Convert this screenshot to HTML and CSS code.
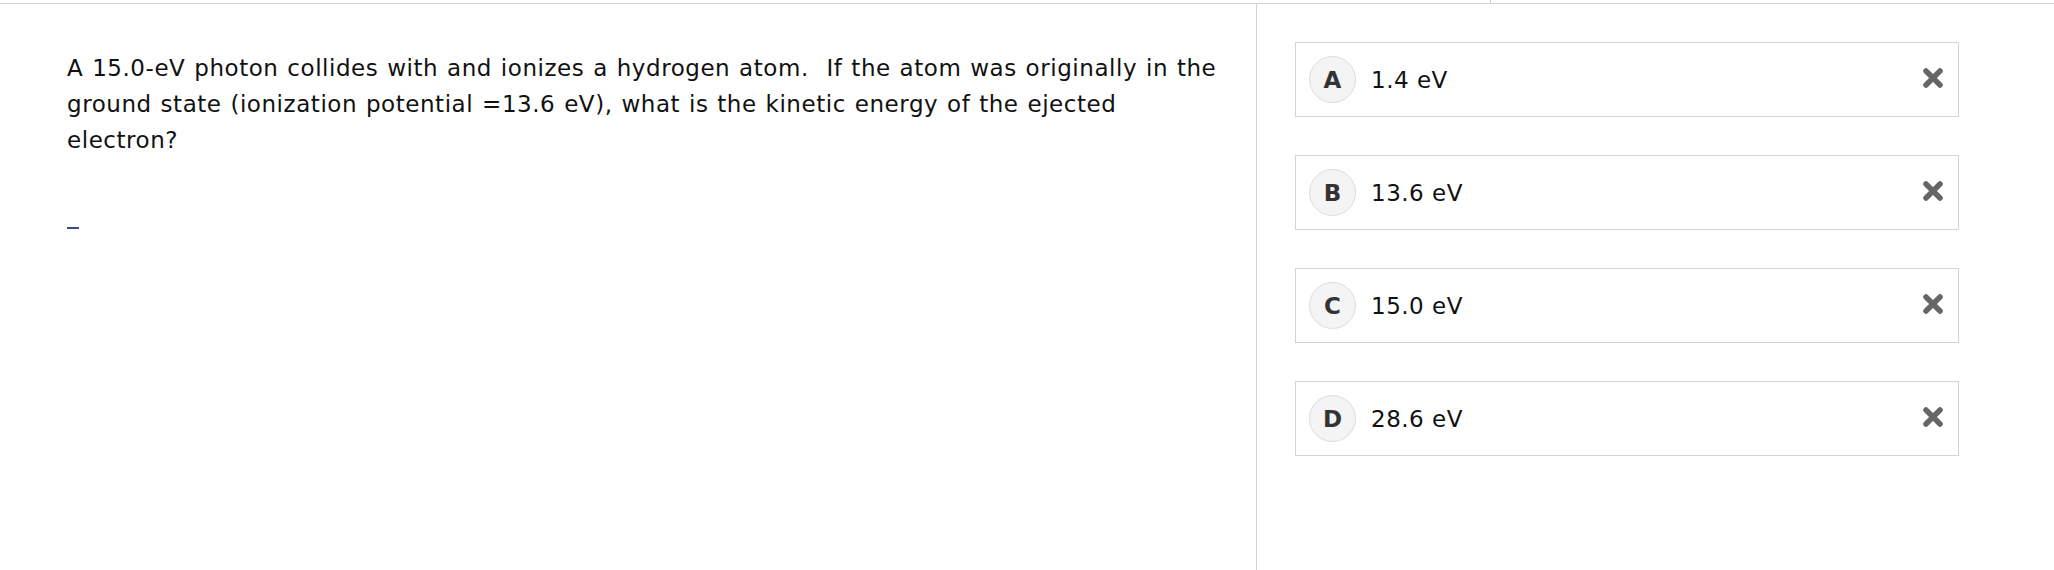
FILE: index.html
```html
<!DOCTYPE html>
<html lang="en">
<head>
<meta charset="utf-8">
<title>Question</title>
<link rel="stylesheet" href="styles.css">
</head>
<body>
<div class="topbar">
  <div class="topbar-left"></div>
  <div class="topbar-right"></div>
</div>
<div class="main">
  <section class="question">
    <p class="stem">A 15.0-eV photon collides with and ionizes a hydrogen atom.&nbsp; If the atom was originally in the ground state (ionization potential =13.6 eV), what is the kinetic energy of the ejected electron?</p>
    <div class="blank"></div>
  </section>
  <section class="options">
    <div class="option">
      <span class="letter">A</span>
      <span class="value">1.4 eV</span>
      <svg class="cross" viewBox="0 0 20 20" width="20" height="20"><path d="M3 3 L17 17 M17 3 L3 17"/></svg>
    </div>
    <div class="option">
      <span class="letter">B</span>
      <span class="value">13.6 eV</span>
      <svg class="cross" viewBox="0 0 20 20" width="20" height="20"><path d="M3 3 L17 17 M17 3 L3 17"/></svg>
    </div>
    <div class="option">
      <span class="letter">C</span>
      <span class="value">15.0 eV</span>
      <svg class="cross" viewBox="0 0 20 20" width="20" height="20"><path d="M3 3 L17 17 M17 3 L3 17"/></svg>
    </div>
    <div class="option">
      <span class="letter">D</span>
      <span class="value">28.6 eV</span>
      <svg class="cross" viewBox="0 0 20 20" width="20" height="20"><path d="M3 3 L17 17 M17 3 L3 17"/></svg>
    </div>
  </section>
</div>
</body>
</html>
```
FILE: styles.css
```css
* { box-sizing: border-box; }
html, body {
  margin: 0;
  padding: 0;
  background: #fff;
}
body {
  font-family: "DejaVu Sans", Verdana, sans-serif;
  color: #111;
  width: 2054px;
  height: 570px;
  overflow: hidden;
}
.topbar {
  display: flex;
  height: 4px;
  border-bottom: 1px solid #cfcfcf;
}
.topbar-left { width: 1490px; }
.topbar-right {
  flex: 1;
  border-left: 1px solid #cfcfcf;
}
.main {
  display: flex;
  height: 566px;
}
.question {
  width: 1257px;
  border-right: 1px solid #d2d2d2;
  padding: 46px 30px 0 67px;
}
.stem {
  margin: 0;
  font-size: 23px;
  line-height: 36px;
  letter-spacing: 0.55px;
  word-spacing: 1px;
}
.blank {
  width: 12px;
  margin-top: 69px;
  border-top: 2px solid #33507e;
}
.options {
  display: flex;
  flex-direction: column;
  gap: 38px;
  padding: 38px 0 0 38px;
}
.option {
  display: flex;
  align-items: center;
  width: 664px;
  height: 75px;
  border: 1px solid #d4d4d4;
  padding: 0 15px 0 13px;
}
.letter {
  display: flex;
  align-items: center;
  justify-content: center;
  width: 47px;
  height: 47px;
  border-radius: 50%;
  border: 1px solid #dcdcdc;
  background: #f4f4f4;
  font-weight: bold;
  font-size: 23px;
  color: #333;
  margin-right: 15px;
}
.value {
  flex: 1;
  font-size: 23px;
  letter-spacing: 0.5px;
  color: #111;
}
.cross {
  margin-bottom: 4px;
}
.cross path {
  fill: none;
  stroke: #666;
  stroke-width: 5.5;
  stroke-linecap: round;
}
```
